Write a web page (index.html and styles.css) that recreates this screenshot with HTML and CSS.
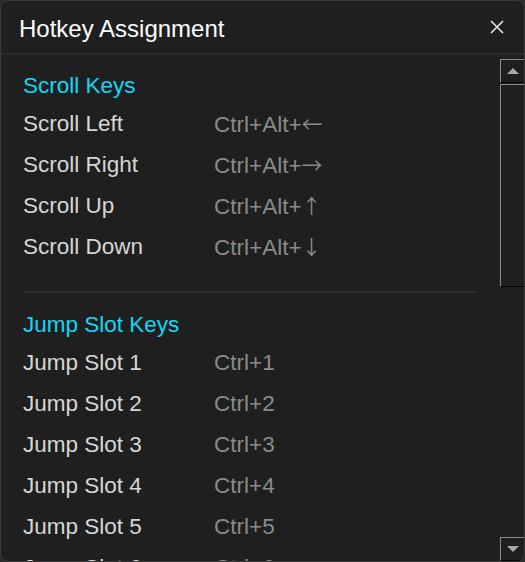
FILE: index.html
```html
<!DOCTYPE html>
<html>
<head>
<meta charset="utf-8">
<link rel="stylesheet" href="styles.css">
</head>
<body>
<div class="window">
  <div class="titlebar">
    <span class="title">Hotkey Assignment</span>
    <svg class="close" width="14" height="14" viewBox="0 0 14 14"><path d="M1 1 L13 13 M13 1 L1 13" stroke="#dde6ee" stroke-width="1.6" fill="none"/></svg>
  </div>
  <div class="title-sep"></div>
  <div class="body">
    <div class="content">
      <div class="heading">Scroll Keys</div>
      <div class="row"><span class="label">Scroll Left</span><span class="key">Ctrl+Alt+<span class="arrow">←</span></span></div>
      <div class="row"><span class="label">Scroll Right</span><span class="key">Ctrl+Alt+<span class="arrow">→</span></span></div>
      <div class="row"><span class="label">Scroll Up</span><span class="key">Ctrl+Alt+<span class="arrow arrow-v">↑</span></span></div>
      <div class="row"><span class="label">Scroll Down</span><span class="key">Ctrl+Alt+<span class="arrow arrow-v">↓</span></span></div>
      <div class="sep"></div>
      <div class="heading heading-2">Jump Slot Keys</div>
      <div class="row"><span class="label">Jump Slot 1</span><span class="key">Ctrl+1</span></div>
      <div class="row"><span class="label">Jump Slot 2</span><span class="key">Ctrl+2</span></div>
      <div class="row"><span class="label">Jump Slot 3</span><span class="key">Ctrl+3</span></div>
      <div class="row"><span class="label">Jump Slot 4</span><span class="key">Ctrl+4</span></div>
      <div class="row"><span class="label">Jump Slot 5</span><span class="key">Ctrl+5</span></div>
      <div class="row"><span class="label">Jump Slot 6</span><span class="key">Ctrl+6</span></div>
    </div>
    <div class="scrollbar">
      <div class="sb-btn"><svg width="12" height="6" viewBox="0 0 12 6"><path d="M0 6 L6 0 L12 6 Z" fill="#a8a8a8"/></svg></div>
      <div class="sb-thumb"></div>
      <div class="sb-track"></div>
      <div class="sb-btn"><svg width="12" height="6" viewBox="0 0 12 6"><path d="M0 0 L12 0 L6 6 Z" fill="#a8a8a8"/></svg></div>
    </div>
  </div>
</div>
</body>
</html>
```

FILE: styles.css
```css
html, body {
  margin: 0;
  padding: 0;
  background: #2c2c2c;
}
body {
  font-family: "Liberation Sans", Arial, sans-serif;
}
.window {
  width: 525px;
  height: 562px;
  box-sizing: border-box;
  border: 1px solid #3a3a3a;
  border-radius: 8px;
  background: #1f1f1f;
  display: flex;
  flex-direction: column;
  overflow: hidden;
}
.titlebar {
  height: 52px;
  display: flex;
  align-items: center;
  justify-content: space-between;
  padding: 0 20px 0 18px;
  flex: none;
}
.title {
  color: #ffffff;
  font-size: 24px;
  padding-top: 3px;
}
.close {
  display: block;
}
.title-sep {
  height: 2px;
  background: #2b2b2b;
  flex: none;
}
.body {
  flex: 1;
  display: flex;
  min-height: 0;
}
.content {
  flex: 1;
  padding: 0 24px 0 22px;
  overflow: hidden;
}
.heading {
  color: #14d6f4;
  font-size: 22.5px;
  height: 35px;
  line-height: 36px;
  margin-top: 13px;
}
.heading-2 {
  margin-top: 14px;
}
.row {
  display: flex;
  height: 41px;
  line-height: 41px;
  font-size: 22.5px;
}
.label {
  color: #d6d6d6;
  width: 191px;
  flex: none;
}
.key {
  color: #8a8a8a;
}
.arrow {
  font-family: "Noto Sans CJK SC", sans-serif;
  font-size: 21px;
}
.arrow-v {
  font-size: 20px;
}
.sep {
  height: 2px;
  background: #2c2c2c;
  margin-top: 24px;
}
.scrollbar {
  width: 24px;
  flex: none;
  display: flex;
  flex-direction: column;
  padding-top: 4px;
}
.sb-btn {
  height: 24px;
  box-sizing: border-box;
  border-top: 1px solid #8a8a8a;
  border-left: 1px solid #8a8a8a;
  border-bottom: 1px solid #000;
  display: flex;
  align-items: center;
  justify-content: center;
  flex: none;
}
.sb-thumb {
  height: 203px;
  margin-top: 1px;
  box-sizing: border-box;
  border-top: 1px solid #8a8a8a;
  border-left: 1px solid #8a8a8a;
  border-bottom: 1px solid #000;
  flex: none;
}
.sb-track {
  flex: 1;
}
```
